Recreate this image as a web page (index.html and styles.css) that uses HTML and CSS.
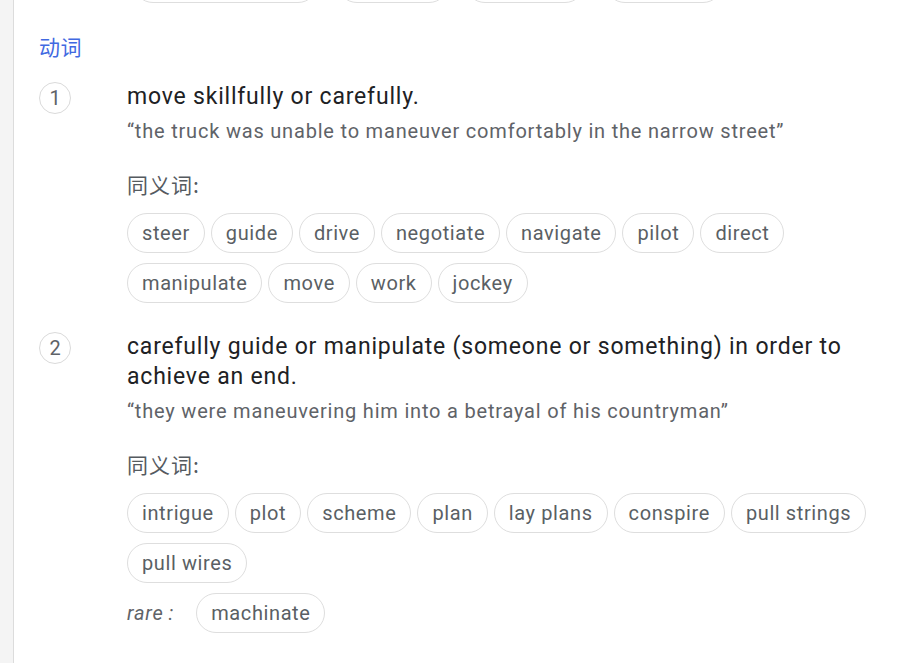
FILE: index.html
```html
<!DOCTYPE html>
<html lang="zh-CN">
<head>
<meta charset="utf-8">
<title>maneuver</title>
<link rel="stylesheet" href="styles.css">
</head>
<body>
<div class="page">
  <div class="side"></div>
  <main class="main">
    <div class="prev-chips" aria-hidden="true">
      <span class="chip ghost g1"></span>
      <span class="chip ghost g2"></span>
      <span class="chip ghost g3"></span>
      <span class="chip ghost g4"></span>
    </div>

    <div class="pos">动词</div>

    <section class="sense">
      <div class="num-col"><span class="num">1</span></div>
      <div class="body">
        <div class="def">move skillfully or carefully.</div>
        <div class="example">“the truck was unable to maneuver comfortably in the narrow street”</div>
        <div class="syn-label">同义词:</div>
        <div class="chips">
          <span class="chip">steer</span>
          <span class="chip">guide</span>
          <span class="chip">drive</span>
          <span class="chip">negotiate</span>
          <span class="chip">navigate</span>
          <span class="chip">pilot</span>
          <span class="chip">direct</span>
          <span class="chip">manipulate</span>
          <span class="chip">move</span>
          <span class="chip">work</span>
          <span class="chip">jockey</span>
        </div>
      </div>
    </section>

    <section class="sense">
      <div class="num-col"><span class="num">2</span></div>
      <div class="body">
        <div class="def">carefully guide or manipulate (someone or something) in order to achieve an end.</div>
        <div class="example">“they were maneuvering him into a betrayal of his countryman”</div>
        <div class="syn-label">同义词:</div>
        <div class="chips">
          <span class="chip">intrigue</span>
          <span class="chip">plot</span>
          <span class="chip">scheme</span>
          <span class="chip">plan</span>
          <span class="chip">lay plans</span>
          <span class="chip">conspire</span>
          <span class="chip">pull strings</span>
          <span class="chip">pull wires</span>
        </div>
        <div class="rare-row">
          <span class="rare">rare<span class="colon">:</span></span>
          <span class="chip">machinate</span>
        </div>
      </div>
    </section>
  </main>
</div>
</body>
</html>
```

FILE: styles.css
```css
html, body {
  margin: 0;
  padding: 0;
  background: #ffffff;
}

body {
  font-family: Roboto, "Noto Sans CJK SC", Arial, sans-serif;
  color: #202124;
  overflow: hidden;
}

.page {
  display: flex;
  min-height: 663px;
}

.side {
  width: 13px;
  flex: 0 0 13px;
  background: #f4f4f4;
  border-right: 1px solid #dcdcdc;
}

.main {
  flex: 1;
  padding: 0 20px 0 25px;
}

.prev-chips {
  display: flex;
  margin-top: -37px;
  padding-left: 94px;
}

.ghost {
  padding: 0;
}

.g1 { width: 185px; }
.g2 { width: 112px; margin-left: 19px; }
.g3 { width: 120px; margin-left: 16px; }
.g4 { width: 118px; margin-left: 20px; }

.pos {
  margin-top: 29px;
  font-family: "Noto Sans CJK SC", Roboto, sans-serif;
  font-size: 21px;
  letter-spacing: 0.5px;
  line-height: 28px;
  color: #4169e1;
}

.sense {
  display: grid;
  grid-template-columns: 88px 1fr;
  margin-top: 22px;
}

.sense + .sense {
  margin-top: 29px;
}

.num {
  display: flex;
  align-items: center;
  justify-content: center;
  width: 30px;
  height: 30px;
  border: 1px solid #dadada;
  border-radius: 50%;
  font-size: 20px;
  color: #5f6368;
  margin-top: 0;
}

.def {
  font-size: 23px;
  letter-spacing: 0.8px;
  line-height: 30px;
  color: #202124;
}

.example {
  margin-top: 5px;
  font-size: 20px;
  letter-spacing: 0.8px;
  line-height: 28px;
  color: #5f6368;
}

.syn-label {
  margin-top: 25px;
  font-family: "Noto Sans CJK SC", Roboto, sans-serif;
  font-size: 21px;
  letter-spacing: 1px;
  line-height: 28px;
  color: #555a5f;
}

.chips {
  display: flex;
  flex-wrap: wrap;
  gap: 10px 6px;
  margin-top: 15px;
}

.chip {
  display: inline-flex;
  align-items: center;
  height: 40px;
  box-sizing: border-box;
  padding: 0 14px;
  border: 1px solid #dedede;
  border-radius: 20px;
  font-size: 20px;
  letter-spacing: 0.6px;
  color: #5a5f64;
  white-space: nowrap;
  background: #fff;
}

.rare-row {
  display: flex;
  align-items: center;
  gap: 22px;
  margin-top: 10px;
}

.rare {
  font-style: italic;
  font-size: 20px;
  letter-spacing: 0.8px;
  color: #5f6368;
}

.colon {
  margin-left: 5px;
}
```
